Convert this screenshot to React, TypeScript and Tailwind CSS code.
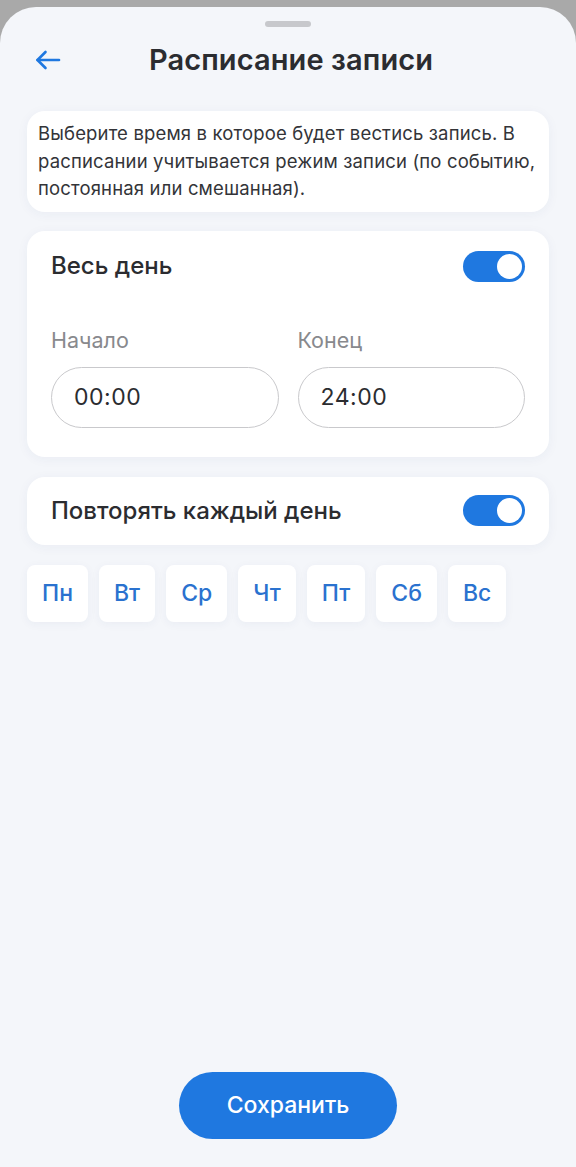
import { useState } from 'react'

const font = { fontFamily: 'Inter, "Noto Sans", sans-serif' }

const days = ['Пн', 'Вт', 'Ср', 'Чт', 'Пт', 'Сб', 'Вс']

function Toggle({ on, onChange }: { on: boolean; onChange: () => void }) {
  return (
    <button
      onClick={onChange}
      className={`w-[62px] h-[31px] rounded-full flex items-center px-[3px] shrink-0 ${
        on ? 'bg-[#1f78e0] justify-end' : 'bg-[#c9ccd2] justify-start'
      }`}
    >
      <span className="w-[25px] h-[25px] rounded-full bg-white block" />
    </button>
  )
}

export default function App() {
  const [allDay, setAllDay] = useState(true)
  const [repeat, setRepeat] = useState(true)

  return (
    <div className="w-[576px] h-[1167px] bg-[#a9a9a9] pt-[7px] overflow-hidden" style={font}>
      <div className="h-full bg-[#f4f6fa] rounded-t-[36px] flex flex-col px-[27px]">
        {/* Handle */}
        <div className="flex justify-center pt-[14px]">
          <div className="w-[46px] h-[6px] rounded-full bg-[#c7c8cc]" />
        </div>

        {/* Header */}
        <div className="relative flex items-center justify-center h-[44px] mt-[11px]">
          <button className="absolute left-[8px] top-[12px] text-[#1f78e0]">
            <svg width="26" height="20" viewBox="0 0 26 20" fill="none" stroke="currentColor" strokeWidth="2.6" strokeLinecap="round" strokeLinejoin="round">
              <path d="M24 10H2.5" />
              <path d="M10.5 2L2.5 10L10.5 18" />
            </svg>
          </button>
          <h1 className="text-[29px] font-semibold text-[#2b2c30] tracking-[0.1px] ml-[6px]">Расписание записи</h1>
        </div>

        {/* Info */}
        <div className="mt-[29px] bg-white rounded-[18px] shadow-[0_2px_12px_rgba(40,60,110,0.05)] pl-[11px] pr-[6px] pt-[9px] pb-[9px]">
          <p className="text-[18.5px] leading-[27.5px] tracking-[0.15px] text-[#333438]">
            Выберите время в которое будет вестись запись. В расписании учитывается режим записи (по событию, постоянная или смешанная).
          </p>
        </div>

        {/* All day */}
        <div className="mt-[19px] bg-white rounded-[18px] shadow-[0_2px_12px_rgba(40,60,110,0.05)] px-[24px] pt-[20px] pb-[29px]">
          <div className="flex items-center justify-between h-[31px]">
            <span className="text-[24px] font-medium text-[#2b2c30]">Весь день</span>
            <Toggle on={allDay} onChange={() => setAllDay(!allDay)} />
          </div>
          <div className="mt-[45px] grid grid-cols-2 gap-[19px]">
            <div>
              <div className="text-[21.5px] text-[#88898d] leading-[26px]">Начало</div>
              <div className="mt-[14px] h-[61px] rounded-full border border-[#c9c9cc] flex items-center px-[22px] text-[23px] text-[#2b2c30] tracking-[0.5px]">
                00:00
              </div>
            </div>
            <div>
              <div className="text-[21.5px] text-[#88898d] leading-[26px]">Конец</div>
              <div className="mt-[14px] h-[61px] rounded-full border border-[#c9c9cc] flex items-center px-[22px] text-[23px] text-[#2b2c30] tracking-[0.5px]">
                24:00
              </div>
            </div>
          </div>
        </div>

        {/* Repeat */}
        <div className="mt-[20px] bg-white rounded-[18px] shadow-[0_2px_12px_rgba(40,60,110,0.05)] px-[24px] h-[68px] flex items-center justify-between">
          <span className="text-[24px] font-medium text-[#2b2c30]">Повторять каждый день</span>
          <Toggle on={repeat} onChange={() => setRepeat(!repeat)} />
        </div>

        {/* Days */}
        <div className="mt-[20px] flex gap-[11px]">
          {days.map((d) => (
            <button
              key={d}
              className="h-[57px] px-[15px] bg-white rounded-[8px] shadow-[0_2px_10px_rgba(40,60,110,0.05)] text-[23px] font-medium text-[#2a72cf]"
            >
              {d}
            </button>
          ))}
        </div>

        <div className="flex-1" />

        {/* Save */}
        <div className="flex justify-center mb-[28px]">
          <button className="w-[218px] h-[67px] rounded-full bg-[#1f78e0] text-white text-[23px] font-medium">
            Сохранить
          </button>
        </div>
      </div>
    </div>
  )
}
